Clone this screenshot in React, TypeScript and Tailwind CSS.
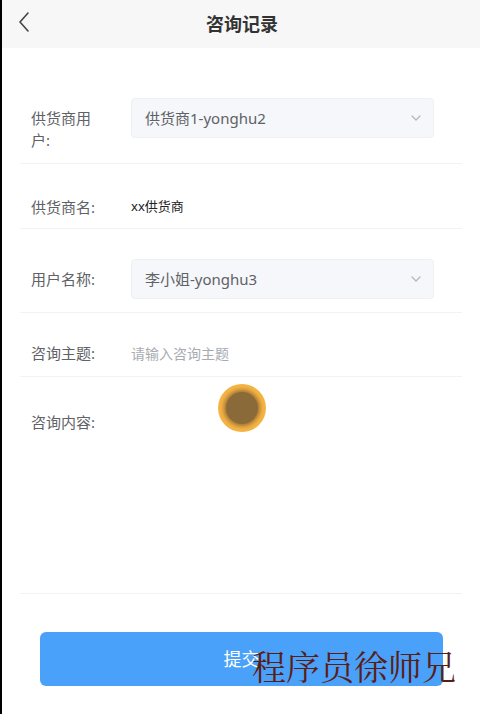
import React from 'react';

const cjk = '"Noto Sans", "Noto Sans CJK SC", sans-serif';

const Chevron = () => (
    <svg width="14" height="14" viewBox="0 0 14 14" fill="none" stroke="#b4b8bf" strokeWidth="1.3" strokeLinecap="round" strokeLinejoin="round">
        <path d="M3 5l4 4 4-4" />
    </svg>
);

const SelectBox: React.FC<{ value: string }> = ({ value }) => (
    <div className="w-[303px] h-[40px] flex items-center justify-between pl-[13px] pr-[10px] bg-[#f5f7fa] border border-[#eef0f4] rounded-[4px]">
        <span className="text-[15px] text-[#606266]">{value}</span>
        <Chevron />
    </div>
);

export default function App() {
    return (
        <div className="relative w-[480px] h-[714px] bg-white border-l-2 border-black overflow-hidden" style={{ fontFamily: cjk }}>
            {/* Header */}
            <div className="h-[48px] bg-[#f7f7f7] flex items-center relative">
                <svg className="absolute left-[15px] top-[11px]" width="14" height="22" viewBox="0 0 14 22" fill="none" stroke="#444" strokeWidth="1.6" strokeLinecap="round" strokeLinejoin="round">
                    <path d="M11 2L3 11l8 9" />
                </svg>
                <div className="flex-1 text-center text-[18px] font-bold text-[#333] pl-[2px]">咨询记录</div>
            </div>

            {/* Form */}
            <div className="px-[18px] pt-[19px]">
                <div className="flex items-start pl-[11px] pt-[31px] pb-[12px] border-b border-[#f2f2f2]">
                    <div className="w-[70px] mr-[30px] pt-[9px] text-[15px] leading-[22px] text-[#606266]">供货商用户:</div>
                    <SelectBox value="供货商1-yonghu2" />
                </div>
                <div className="flex items-center pl-[11px] pt-[32px] pb-[10px] border-b border-[#f2f2f2]">
                    <div className="w-[70px] mr-[30px] text-[15px] leading-[22px] text-[#606266]">供货商名:</div>
                    <span className="text-[13px] text-[#222]">xx供货商</span>
                </div>
                <div className="flex items-center pl-[11px] pt-[30px] pb-[13px] border-b border-[#f2f2f2]">
                    <div className="w-[70px] mr-[30px] text-[15px] leading-[22px] text-[#606266]">用户名称:</div>
                    <SelectBox value="李小姐-yonghu3" />
                </div>
                <div className="flex items-center pl-[11px] pt-[29px] pb-[12px] border-b border-[#f2f2f2]">
                    <div className="w-[70px] mr-[30px] text-[15px] leading-[22px] text-[#606266]">咨询主题:</div>
                    <span className="text-[14px] text-[#a8abb2]">请输入咨询主题</span>
                </div>
                <div className="h-[217px] flex items-start pl-[11px] pt-[34px] border-b border-[#f2f2f2]">
                    <div className="w-[70px] mr-[30px] text-[15px] leading-[22px] text-[#606266]">咨询内容:</div>
                </div>
            </div>

            <div className="px-[38px] pt-[38px]">
                <button className="w-[403px] h-[54px] bg-[#4aa1f9] rounded-[6px] text-white text-[18px]">提交</button>
            </div>

            {/* touch indicator */}
            <div className="absolute left-[216px] top-[384px] w-[48px] h-[48px] rounded-full bg-[#f6b443] flex items-center justify-center">
                <div className="w-[32px] h-[32px] rounded-full bg-[#8b6a3a] shadow-[0_0_4px_2px_#9a7035]" />
            </div>

            {/* watermark */}
            <div className="absolute left-[250px] top-[644px] text-[34px] leading-[44px] text-[#5a1e17]" style={{ fontFamily: '"Noto Serif CJK SC", "Liberation Serif", "Noto Sans CJK SC", serif' }}>程序员徐师兄</div>
        </div>
    );
}
